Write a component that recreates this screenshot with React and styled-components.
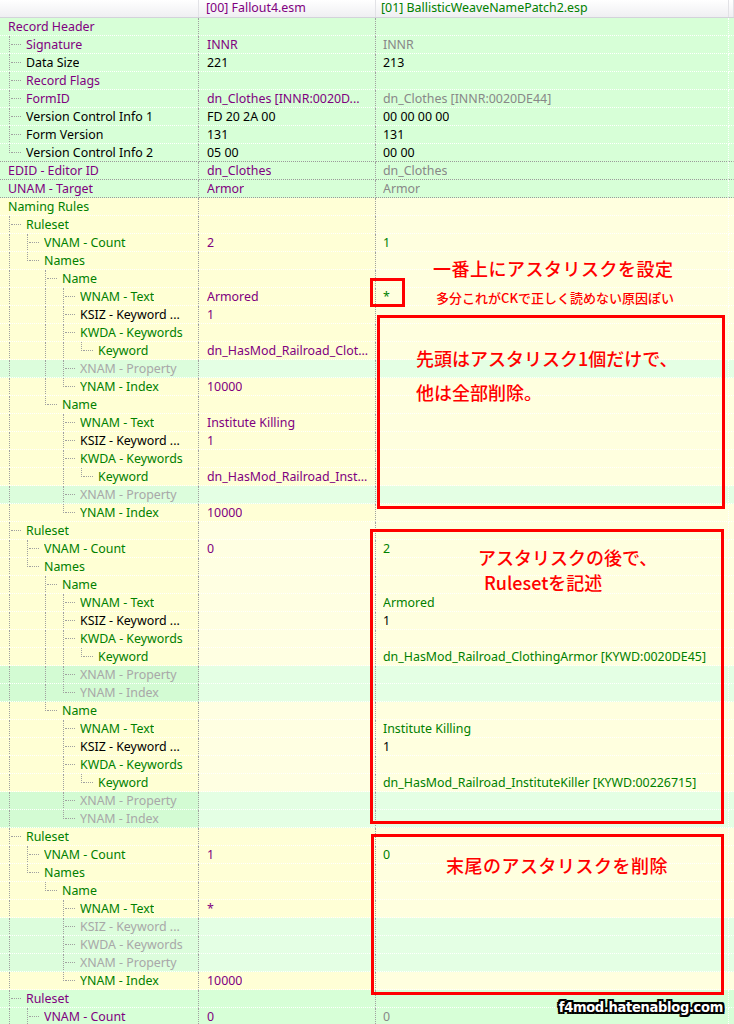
import React from 'react';
import styled, { createGlobalStyle } from 'styled-components';

const GlobalStyle = createGlobalStyle`
  html, body {
    margin: 0;
    padding: 0;
    overflow: hidden;
    background: #ffffff;
  }
  body {
    font-family: "Noto Sans", "Noto Sans CJK JP", sans-serif;
  }
`;

// text colours used by the record view
const INK = {
  p: '#800080',
  g: '#008000',
  k: '#000000',
  x: '#a8a8a8',
  m: '#888888',
};

// [col1, col2, col3] backgrounds for each kind of row
const BG = {
  g: ['#d7ffd7', '#d7ffd7', '#d7ffd7'],
  y: ['#ffffd4', '#ffffd6', '#ffffdf'],
  y2: ['#ffffd4', '#ffffe2', '#ffffdf'],
  l: ['#dcfddc', '#e4ffe4', '#e4ffe4'],
  l2: ['#d3fbd3', '#e4ffe4', '#e4ffe4'],
};

const COLS = '199px 177px 353px 5px';

// level, label, label colour, value0, colour, value1, colour, background, dark separator
const rows = [
  [0, 'Record Header', 'p', '', '', '', '', 'g'],
  [1, 'Signature', 'p', 'INNR', 'p', 'INNR', 'm', 'g'],
  [1, 'Data Size', 'k', '221', 'k', '213', 'k', 'g'],
  [1, 'Record Flags', 'p', '', '', '', '', 'g'],
  [1, 'FormID', 'p', 'dn_Clothes [INNR:0020D...', 'p', 'dn_Clothes [INNR:0020DE44]', 'm', 'g'],
  [1, 'Version Control Info 1', 'k', 'FD 20 2A 00', 'k', '00 00 00 00', 'k', 'g'],
  [1, 'Form Version', 'k', '131', 'k', '131', 'k', 'g'],
  [1, 'Version Control Info 2', 'k', '05 00', 'k', '00 00', 'k', 'g', true],
  [0, 'EDID - Editor ID', 'p', 'dn_Clothes', 'p', 'dn_Clothes', 'm', 'g', true],
  [0, 'UNAM - Target', 'p', 'Armor', 'p', 'Armor', 'm', 'g', true],
  [0, 'Naming Rules', 'g', '', '', '', '', 'y'],
  [1, 'Ruleset', 'g', '', '', '', '', 'y'],
  [2, 'VNAM - Count', 'g', '2', 'p', '1', 'g', 'y'],
  [2, 'Names', 'g', '', '', '', '', 'y'],
  [3, 'Name', 'g', '', '', '', '', 'y'],
  [4, 'WNAM - Text', 'g', 'Armored', 'p', '*', 'g', 'y'],
  [4, 'KSIZ - Keyword ...', 'k', '1', 'p', '', '', 'y'],
  [4, 'KWDA - Keywords', 'g', '', '', '', '', 'y'],
  [5, 'Keyword', 'g', 'dn_HasMod_Railroad_Clot...', 'p', '', '', 'y'],
  [4, 'XNAM - Property', 'x', '', '', '', '', 'l'],
  [4, 'YNAM - Index', 'g', '10000', 'p', '', '', 'y'],
  [3, 'Name', 'g', '', '', '', '', 'y'],
  [4, 'WNAM - Text', 'g', 'Institute Killing', 'p', '', '', 'y'],
  [4, 'KSIZ - Keyword ...', 'k', '1', 'p', '', '', 'y'],
  [4, 'KWDA - Keywords', 'g', '', '', '', '', 'y'],
  [5, 'Keyword', 'g', 'dn_HasMod_Railroad_Inst...', 'p', '', '', 'y'],
  [4, 'XNAM - Property', 'x', '', '', '', '', 'l'],
  [4, 'YNAM - Index', 'g', '10000', 'p', '', '', 'y'],
  [1, 'Ruleset', 'g', '', '', '', '', 'y2'],
  [2, 'VNAM - Count', 'g', '0', 'p', '2', 'g', 'y2'],
  [2, 'Names', 'g', '', '', '', '', 'y2'],
  [3, 'Name', 'g', '', '', '', '', 'y2'],
  [4, 'WNAM - Text', 'g', '', '', 'Armored', 'g', 'y2'],
  [4, 'KSIZ - Keyword ...', 'k', '', '', '1', 'k', 'y2'],
  [4, 'KWDA - Keywords', 'g', '', '', '', '', 'y2'],
  [5, 'Keyword', 'g', '', '', 'dn_HasMod_Railroad_ClothingArmor [KYWD:0020DE45]', 'g', 'y2'],
  [4, 'XNAM - Property', 'x', '', '', '', '', 'l2'],
  [4, 'YNAM - Index', 'x', '', '', '', '', 'l2'],
  [3, 'Name', 'g', '', '', '', '', 'y2'],
  [4, 'WNAM - Text', 'g', '', '', 'Institute Killing', 'g', 'y2'],
  [4, 'KSIZ - Keyword ...', 'k', '', '', '1', 'k', 'y2'],
  [4, 'KWDA - Keywords', 'g', '', '', '', '', 'y2'],
  [5, 'Keyword', 'g', '', '', 'dn_HasMod_Railroad_InstituteKiller [KYWD:00226715]', 'g', 'y2'],
  [4, 'XNAM - Property', 'x', '', '', '', '', 'l2'],
  [4, 'YNAM - Index', 'x', '', '', '', '', 'l2'],
  [1, 'Ruleset', 'g', '', '', '', '', 'y'],
  [2, 'VNAM - Count', 'g', '1', 'p', '0', 'g', 'y'],
  [2, 'Names', 'g', '', '', '', '', 'y'],
  [3, 'Name', 'g', '', '', '', '', 'y'],
  [4, 'WNAM - Text', 'g', '*', 'p', '', '', 'y'],
  [4, 'KSIZ - Keyword ...', 'x', '', '', '', '', 'l'],
  [4, 'KWDA - Keywords', 'x', '', '', '', '', 'l'],
  [4, 'XNAM - Property', 'x', '', '', '', '', 'l'],
  [4, 'YNAM - Index', 'g', '10000', 'p', '', '', 'y'],
  [1, 'Ruleset', 'p', '', '', '', '', 'g'],
  [2, 'VNAM - Count', 'p', '0', 'p', '0', 'm', 'g'],
  [2, 'Names', 'p', '', '', '', '', 'g'],
];

function hasNext(i, k) {
  for (let j = i + 1; j < rows.length; j++) {
    if (rows[j][0] < k) return false;
    if (rows[j][0] === k) return true;
  }
  // the list goes on below the window
  return k <= 2;
}

const Page = styled.div`
  position: relative;
  width: 734px;
  height: 1024px;
  overflow: hidden;
  font-size: 12.4px;
  line-height: 17px;
`;

const HeaderRow = styled.div`
  display: grid;
  grid-template-columns: ${COLS};
  height: 17px;
  background: linear-gradient(#ffffff, #efeff2);
  border-bottom: 1px solid #d3d3da;
`;

const HeaderCell = styled.div`
  padding-left: ${p => p.$pad || 0}px;
  color: ${p => p.$color || '#000'};
  border-right: 1px solid #e2e2e6;
  white-space: nowrap;
  overflow: hidden;
  line-height: 16px;
`;

const Row = styled.div`
  display: grid;
  grid-template-columns: ${COLS};
  height: 18px;
`;

const Cell = styled.div`
  display: flex;
  align-items: stretch;
  box-sizing: border-box;
  height: 18px;
  padding-left: ${p => p.$pad}px;
  background: ${p => p.$bg};
  color: ${p => p.$color};
  border-bottom: 1px dotted ${p => (p.$dark ? '#9a9a9a' : '#ffffff')};
  border-right: 1px dotted ${p => p.$line || 'transparent'};
  white-space: nowrap;
  overflow: hidden;
`;

const Text = styled.span`
  line-height: 17px;
  overflow: hidden;
`;

const Guide = styled.span`
  position: relative;
  flex: 0 0 18px;
  &::before {
    content: '';
    display: ${p => (p.$v === 'none' ? 'none' : 'block')};
    position: absolute;
    left: 1px;
    top: 0;
    height: ${p => (p.$v === 'half' ? '9px' : '18px')};
    border-left: 1px dotted #a0a0a0;
  }
  &::after {
    content: '';
    display: ${p => (p.$elbow ? 'block' : 'none')};
    position: absolute;
    left: 3px;
    top: 8px;
    width: 10px;
    border-top: 1px dotted #a0a0a0;
  }
`;

// red hand-drawn callouts laid over the record view
const Callout = styled.div`
  position: absolute;
  left: ${p => p.$x}px;
  top: ${p => p.$y}px;
  width: ${p => p.$w}px;
  height: ${p => p.$h}px;
  box-sizing: border-box;
  border: ${p => (p.$bare ? 'none' : '3px solid #ff0000')};
  padding: ${p => p.$pad || '0'};
  display: flex;
  flex-direction: column;
  align-items: flex-start;
  gap: ${p => p.$gap || 0}px;
`;

const Note = styled.div`
  font-family: "Noto Sans CJK JP", "Noto Sans", sans-serif;
  font-size: ${p => p.$size || 18}px;
  line-height: ${p => p.$size || 18}px;
  font-weight: 500;
  letter-spacing: ${p => p.$ls || 0}px;
  margin-left: ${p => p.$indent || 0}px;
  color: #ff0000;
  white-space: nowrap;
`;

const Watermark = styled.div`
  position: absolute;
  right: 11px;
  bottom: 8px;
  font-family: "DejaVu Sans Condensed", "DejaVu Sans", sans-serif;
  font-stretch: condensed;
  font-weight: bold;
  font-size: 14.5px;
  line-height: 18px;
  letter-spacing: -0.3px;
  color: #ffffff;
  white-space: nowrap;
  text-shadow:
    -2px -2px 0 #000, 2px -2px 0 #000, -2px 2px 0 #000, 2px 2px 0 #000,
    0 -2px 0 #000, 0 2px 0 #000, -2px 0 0 #000, 2px 0 0 #000;
`;

function TreeRow({ row, i }) {
  const [level, label, lc, v1, c1, v2, c2, kind, dark] = row;
  const bg = BG[kind];
  const guides = [];
  for (let k = 1; k <= level; k++) {
    if (k < level) {
      guides.push(<Guide key={k} $v={hasNext(i, k) ? 'full' : 'none'} />);
    } else {
      guides.push(<Guide key={k} $elbow $v={hasNext(i, k) ? 'full' : 'half'} />);
    }
  }
  return (
    <Row>
      <Cell $pad={8} $bg={bg[0]} $color={INK[lc]} $dark={dark} $line="#a0a0a0">
        {guides}
        <Text>{label}</Text>
      </Cell>
      <Cell $pad={8} $bg={bg[1]} $color={INK[c1] || '#000'} $dark={dark} $line="#a0a0a0">
        <Text>{v1}</Text>
      </Cell>
      <Cell $pad={7} $bg={bg[2]} $color={INK[c2] || '#000'} $dark={dark} $line="#ffffff">
        <Text>{v2}</Text>
      </Cell>
      <Cell $pad={0} $bg={bg[2]} $dark={dark} />
    </Row>
  );
}

export default function App() {
  return (
    <Page>
      <GlobalStyle />
      <HeaderRow>
        <HeaderCell />
        <HeaderCell $pad={7} $color="#800080">[00] Fallout4.esm</HeaderCell>
        <HeaderCell $pad={5} $color="#008000">[01] BallisticWeaveNamePatch2.esp</HeaderCell>
        <HeaderCell />
      </HeaderRow>
      {rows.map((row, i) => (
        <TreeRow key={i} row={row} i={i} />
      ))}

      <Callout $x={370} $y={278} $w={35} $h={29} />
      <Callout $bare $x={433} $y={259} $gap={14}>
        <Note $ls={0.5}>一番上にアスタリスクを設定</Note>
        <Note $size={13} $indent={3}>多分これがCKで正しく読めない原因ぽい</Note>
      </Callout>
      <Callout $x={377} $y={315} $w={348} $h={194} $pad="31px 0 0 36px" $gap={16}>
        <Note>先頭はアスタリスク1個だけで、</Note>
        <Note>他は全部削除。</Note>
      </Callout>
      <Callout $x={370} $y={529} $w={354} $h={295} $pad="16px 0 0 105px" $gap={7}>
        <Note>アスタリスクの後で、</Note>
        <Note $indent={6}>Rulesetを記述</Note>
      </Callout>
      <Callout $x={371} $y={834} $w={353} $h={161} $pad="19px 0 0 72px">
        <Note $ls={0.5}>末尾のアスタリスクを削除</Note>
      </Callout>

      <Watermark>f4mod.hatenablog.com</Watermark>
    </Page>
  );
}
